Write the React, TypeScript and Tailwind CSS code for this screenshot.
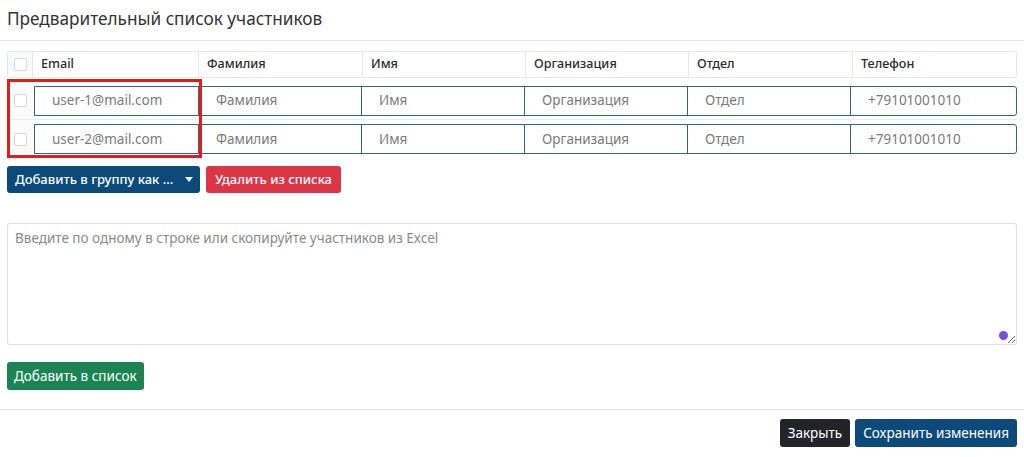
import React from 'react';

const columns = ['Email', 'Фамилия', 'Имя', 'Организация', 'Отдел', 'Телефон'];

const rows = [
  ['user-1@mail.com', 'Фамилия', 'Имя', 'Организация', 'Отдел', '+79101001010'],
  ['user-2@mail.com', 'Фамилия', 'Имя', 'Организация', 'Отдел', '+79101001010'],
];

const gridCols = 'grid grid-cols-[25px_166px_164px_163px_163px_164px_165px]';

const Checkbox: React.FC = () => (
  <span className="block w-[13px] h-[13px] border border-[#d6d6d6] rounded-[2px] bg-white" />
);

const App: React.FC = () => {
  return (
    <div className="w-[1024px] h-[457px] bg-white text-[#333] font-['Noto_Sans','Open_Sans',sans-serif] relative overflow-hidden">
      <div className="h-[41px] border-b border-[#e3e3e3] px-[7px] pt-[7px]">
        <h2 className="text-[17.2px] leading-[24px] text-[#333]">Предварительный список участников</h2>
      </div>

      <div className="px-[7px] pt-[10px]">
        <div className={`${gridCols} h-[27px] border border-[#e6e6e6] rounded-[3px] text-[12.6px] font-medium text-[#2b2b2b]`}>
          <div className="flex items-center justify-center border-r border-[#e6e6e6] bg-[#f8f9fa]">
            <Checkbox />
          </div>
          {columns.map((c, i) => (
            <div
              key={c}
              className={`flex items-center px-[8px] ${i < columns.length - 1 ? 'border-r border-[#e6e6e6]' : ''}`}
            >
              {c}
            </div>
          ))}
        </div>

        <div className="mt-[4px]">
          {rows.map((r, ri) => (
            <div key={ri} className={`${gridCols} h-[38px] ${ri === 0 ? 'border-b border-[#ececec]' : ''}`}>
              <div className="flex items-center justify-center border-l border-[#ececec] bg-[#fafafa]">
                <Checkbox />
              </div>
              <div className="col-span-6 flex items-center pl-[2px]">
                <div className="flex w-full h-[30px] border border-[#2f6592] rounded-r-[3px] text-[13.5px] text-[#7a7a7a]">
                  {r.map((v, i) => (
                    <div
                      key={i}
                      className={`flex items-center ${i === 0 ? 'w-[164px] pl-[17px]' : 'w-[163px] pl-[17px]'} ${i < r.length - 1 ? 'border-r border-[#2f6592]' : 'flex-1'}`}
                    >
                      {v}
                    </div>
                  ))}
                </div>
              </div>
            </div>
          ))}
        </div>

        <div className="flex gap-[6px] mt-[8px] text-[13px] font-medium text-white">
          <button className="h-[27px] w-[193px] rounded-[3px] bg-[#0c4a7c] flex items-center pl-[8px] gap-[12px]">
            <span>Добавить в группу как ...</span>
            <svg width="8" height="5" viewBox="0 0 8 5"><path d="M0 0h8L4 5z" fill="white" /></svg>
          </button>
          <button className="h-[27px] px-[9px] rounded-[3px] bg-[#dc3545]">Удалить из списка</button>
        </div>

        <div className="relative mt-[30px]">
          <textarea
            className="block w-full h-[122px] border border-[#e0e0e0] rounded-[3px] px-[7px] py-[4px] text-[13.5px] text-[#333] placeholder:text-[#8a8a8a] outline-none"
            placeholder="Введите по одному в строке или скопируйте участников из Excel"
          />
          <span className="absolute right-[9px] bottom-[5px] w-[9px] h-[9px] rounded-full bg-[#7c4ddb]" />
        </div>

        <button className="mt-[17px] h-[28px] px-[7px] rounded-[3px] bg-[#1a8553] text-white text-[13.5px]">
          Добавить в список
        </button>
      </div>

      <div className="mt-[19px] border-t border-[#e3e3e3] flex justify-end gap-[5px] px-[7px] pt-[9px] text-[13.5px] text-white">
        <button className="h-[28px] px-[8px] rounded-[3px] bg-[#212529]">Закрыть</button>
        <button className="h-[28px] px-[8px] rounded-[3px] bg-[#0c4a7c]">Сохранить изменения</button>
      </div>

      <div className="absolute left-[7px] top-[79px] w-[195px] h-[79px] border-[3px] border-[#f0141c] pointer-events-none" />
    </div>
  );
};

export default App;
